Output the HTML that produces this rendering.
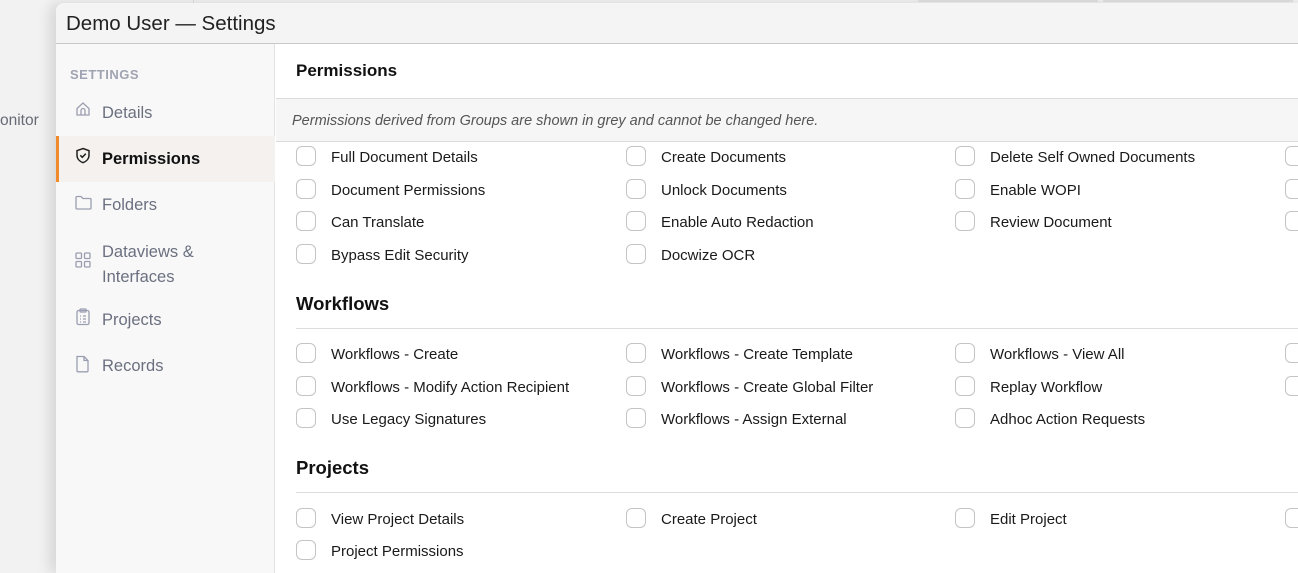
<!DOCTYPE html>
<html><head><meta charset="utf-8"><style>
*{box-sizing:border-box;margin:0;padding:0}
body{width:1298px;height:561px;overflow:hidden;background:#f2f2f2;font-family:"Liberation Sans",sans-serif;position:relative;color:#1a1a1a}
.a{position:absolute;white-space:nowrap}
.modal{position:absolute;left:56px;top:3px;width:1250px;height:570px;background:#fff;border-radius:8px 0 0 0;box-shadow:-6px 0 14px rgba(0,0,0,.12);overflow:hidden}
.hdr{position:absolute;left:0;top:0;right:0;height:41px;background:#f4f4f4;border-bottom:1px solid #c8c8c8}
.side{position:absolute;left:0;top:41px;width:219px;bottom:0;background:#f8f8f8;border-right:1px solid #e2e2e2}
.nav{position:absolute;left:46px;font-size:16.5px;color:#6b7080}
.ic{position:absolute;left:19px}
.cb{position:absolute;width:20px;height:20px;border:1px solid #c4c4c4;border-radius:6px;background:#fff}
.lb{position:absolute;font-size:15px;color:#1a1a1a;white-space:nowrap}
.h{position:absolute;font-size:18.5px;font-weight:bold;color:#111}
.ln{position:absolute;height:1px;background:#dcdcdc}
</style></head><body>
<div class="a" style="left:0;top:112px;font-size:15.5px;color:#666a75">onitor</div>
<div style="position:absolute;left:193px;top:0;width:1px;height:3px;background:#ddd"></div>
<div style="position:absolute;left:918px;top:0;width:180px;height:2px;background:#e2e2e2"></div>
<div style="position:absolute;left:1103px;top:0;width:190px;height:2px;background:#e2e2e2"></div>
<div class="modal">
 <div class="hdr"><div class="a" style="left:10px;top:9px;font-size:20.5px;color:#222">Demo User — Settings</div></div>
 <div class="side">
  <div class="a" style="left:14px;top:23px;font-size:13px;font-weight:bold;color:#a0a4b2;letter-spacing:.5px">SETTINGS</div>
  <svg class="ic" style="top:57px" width="16" height="16" viewBox="0 0 16 16" fill="none" stroke="#9a9eb0" stroke-width="1.3"><path d="M2 7.5L8 2l6 5.5V14H2z"/><path d="M6 14V9.5a2 2 0 0 1 4 0V14"/></svg>
  <div class="nav" style="top:60px">Details</div>
  <div style="position:absolute;left:0;top:92px;width:219px;height:46px;background:#f4f1ee;border-left:3px solid #f08a2c"></div>
  <svg class="ic" style="top:103px" width="16" height="17" viewBox="0 0 16 17" fill="none" stroke="#222" stroke-width="1.5"><path d="M8 1.5l6 2.2v4.5c0 3.5-2.6 6.2-6 7.5C4.6 14.4 2 11.7 2 8.2V3.7z"/><path d="M5.3 8.3l2 2 3.5-3.6"/></svg>
  <div class="nav" style="top:106px;color:#111;font-weight:bold">Permissions</div>
  <svg class="ic" style="top:151px" width="17" height="15" viewBox="0 0 17 15" fill="none" stroke="#9a9eb0" stroke-width="1.3"><path d="M1 2.5a1 1 0 0 1 1-1h4l2 2h7a1 1 0 0 1 1 1V13a1 1 0 0 1-1 1H2a1 1 0 0 1-1-1z"/></svg>
  <div class="nav" style="top:152px">Folders</div>
  <svg class="ic" style="top:208px" width="16" height="16" viewBox="0 0 16 16" fill="none" stroke="#9a9eb0" stroke-width="1.3"><rect x="1" y="1" width="5.5" height="5.5" rx="1"/><rect x="9.5" y="1" width="5.5" height="5.5" rx="1"/><rect x="1" y="9.5" width="5.5" height="5.5" rx="1"/><rect x="9.5" y="9.5" width="5.5" height="5.5" rx="1"/></svg>
  <div class="nav" style="top:196px;line-height:25px">Dataviews &amp;<br>Interfaces</div>
  <svg class="ic" style="top:264px" width="16" height="18" viewBox="0 0 16 18" fill="none" stroke="#9a9eb0" stroke-width="1.3"><rect x="2" y="2.5" width="12" height="14" rx="1.5"/><rect x="5" y="1" width="6" height="3" rx=".8"/><path d="M5 8h1M8 8h3M5 11h1M8 11h3M5 14h1M8 14h3"/></svg>
  <div class="nav" style="top:267px">Projects</div>
  <svg class="ic" style="top:311px" width="15" height="18" viewBox="0 0 15 18" fill="none" stroke="#9a9eb0" stroke-width="1.3"><path d="M2 1.5h7l4 4V16a.8.8 0 0 1-.8.8H2.8A.8.8 0 0 1 2 16z"/><path d="M9 1.5v4h4"/></svg>
  <div class="nav" style="top:313px">Records</div>
 </div>
 <div class="h" style="left:240px;top:58px;font-size:17px">Permissions</div>
 <div style="position:absolute;left:220px;top:95px;right:0;height:44px;background:#f6f6f6;border-top:1px solid #dcdcdc;border-bottom:1px solid #dcdcdc"></div>
 <div class="a" style="left:236px;top:110px;font-size:14.5px;font-style:italic;color:#555">Permissions derived from Groups are shown in grey and cannot be changed here.</div>
</div>
<div id="c"></div>
<div class="h" style="left:296px;top:293px">Workflows</div>
<div class="ln" style="left:296px;top:328px;width:1002px"></div>
<div class="h" style="left:296px;top:457px">Projects</div>
<div class="ln" style="left:296px;top:492px;width:1002px"></div>
<script>
var rows=[[156,["Full Document Details","Create Documents","Delete Self Owned Documents",""]],
[189,["Document Permissions","Unlock Documents","Enable WOPI",""]],
[221,["Can Translate","Enable Auto Redaction","Review Document",""]],
[254,["Bypass Edit Security","Docwize OCR"]],
[353,["Workflows - Create","Workflows - Create Template","Workflows - View All",""]],
[386,["Workflows - Modify Action Recipient","Workflows - Create Global Filter","Replay Workflow",""]],
[418,["Use Legacy Signatures","Workflows - Assign External","Adhoc Action Requests"]],
[518,["View Project Details","Create Project","Edit Project",""]],
[550,["Project Permissions"]]];
var xs=[296,626,955,1285],h="";
rows.forEach(function(r){r[1].forEach(function(t,i){h+='<div class="cb" style="left:'+xs[i]+'px;top:'+(r[0]-10)+'px"></div>';if(t)h+='<div class="lb" style="left:'+(xs[i]+35)+'px;top:'+(r[0]-7)+'px">'+t+'</div>';});});
document.getElementById('c').innerHTML=h;
</script>
</body></html>
